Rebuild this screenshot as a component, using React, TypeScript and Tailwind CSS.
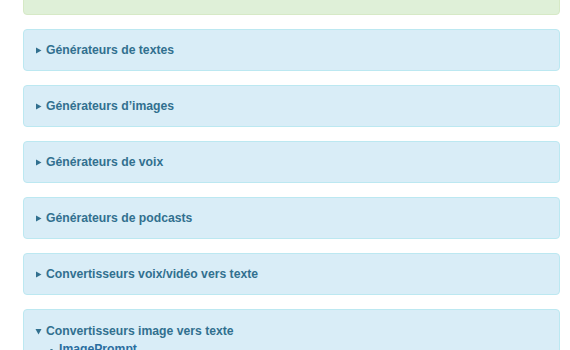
import React from "react";

const sections = [
  "Générateurs de textes",
  "Générateurs d’images",
  "Générateurs de voix",
  "Générateurs de podcasts",
  "Convertisseurs voix/vidéo vers texte",
];

function Arrow({ open = false }: { open?: boolean }) {
  return (
    <svg width="7" height="7" viewBox="0 0 7 7" className="shrink-0">
      {open ? <path d="M0.5 1h6L3.5 6.5z" fill="#31708f" /> : <path d="M1 0.5v6l5.5-3z" fill="#31708f" />}
    </svg>
  );
}

export default function App() {
  return (
    <div className="bg-white h-[350px] overflow-hidden pl-[23px] pr-[10px] font-['Liberation_Sans',Arial,sans-serif]">
      {/* success box, mostly scrolled away */}
      <div className="-mt-[30px] h-[45px] mb-[14px] bg-[#dff0d8] border border-[#d6e9c6] rounded" />

      {sections.map((s) => (
        <div
          key={s}
          className="mb-[14px] bg-[#d9edf7] border border-[#bce8f1] rounded px-[11px] py-[11px] text-[#31708f] text-[12.2px] leading-[18px] font-bold"
        >
          <div className="flex items-center gap-[4px]">
            <Arrow />
            <span>{s}</span>
          </div>
        </div>
      ))}

      <div className="bg-[#d9edf7] border border-[#bce8f1] rounded px-[11px] pt-[12px] pb-4 text-[#31708f] text-[12.2px] leading-[18px] font-bold">
        <div className="flex items-center gap-[4px]">
          <Arrow open />
          <span>Convertisseurs image vers texte</span>
        </div>
        <ul className="pl-[15px]">
          <li className="flex items-center gap-[6px]">
            <span className="w-[3px] h-[3px] rounded-full bg-[#31708f] mt-[3px]" />
            <span className="text-[#2a6ea0]">ImagePrompt</span>
          </li>
        </ul>
      </div>
    </div>
  );
}
